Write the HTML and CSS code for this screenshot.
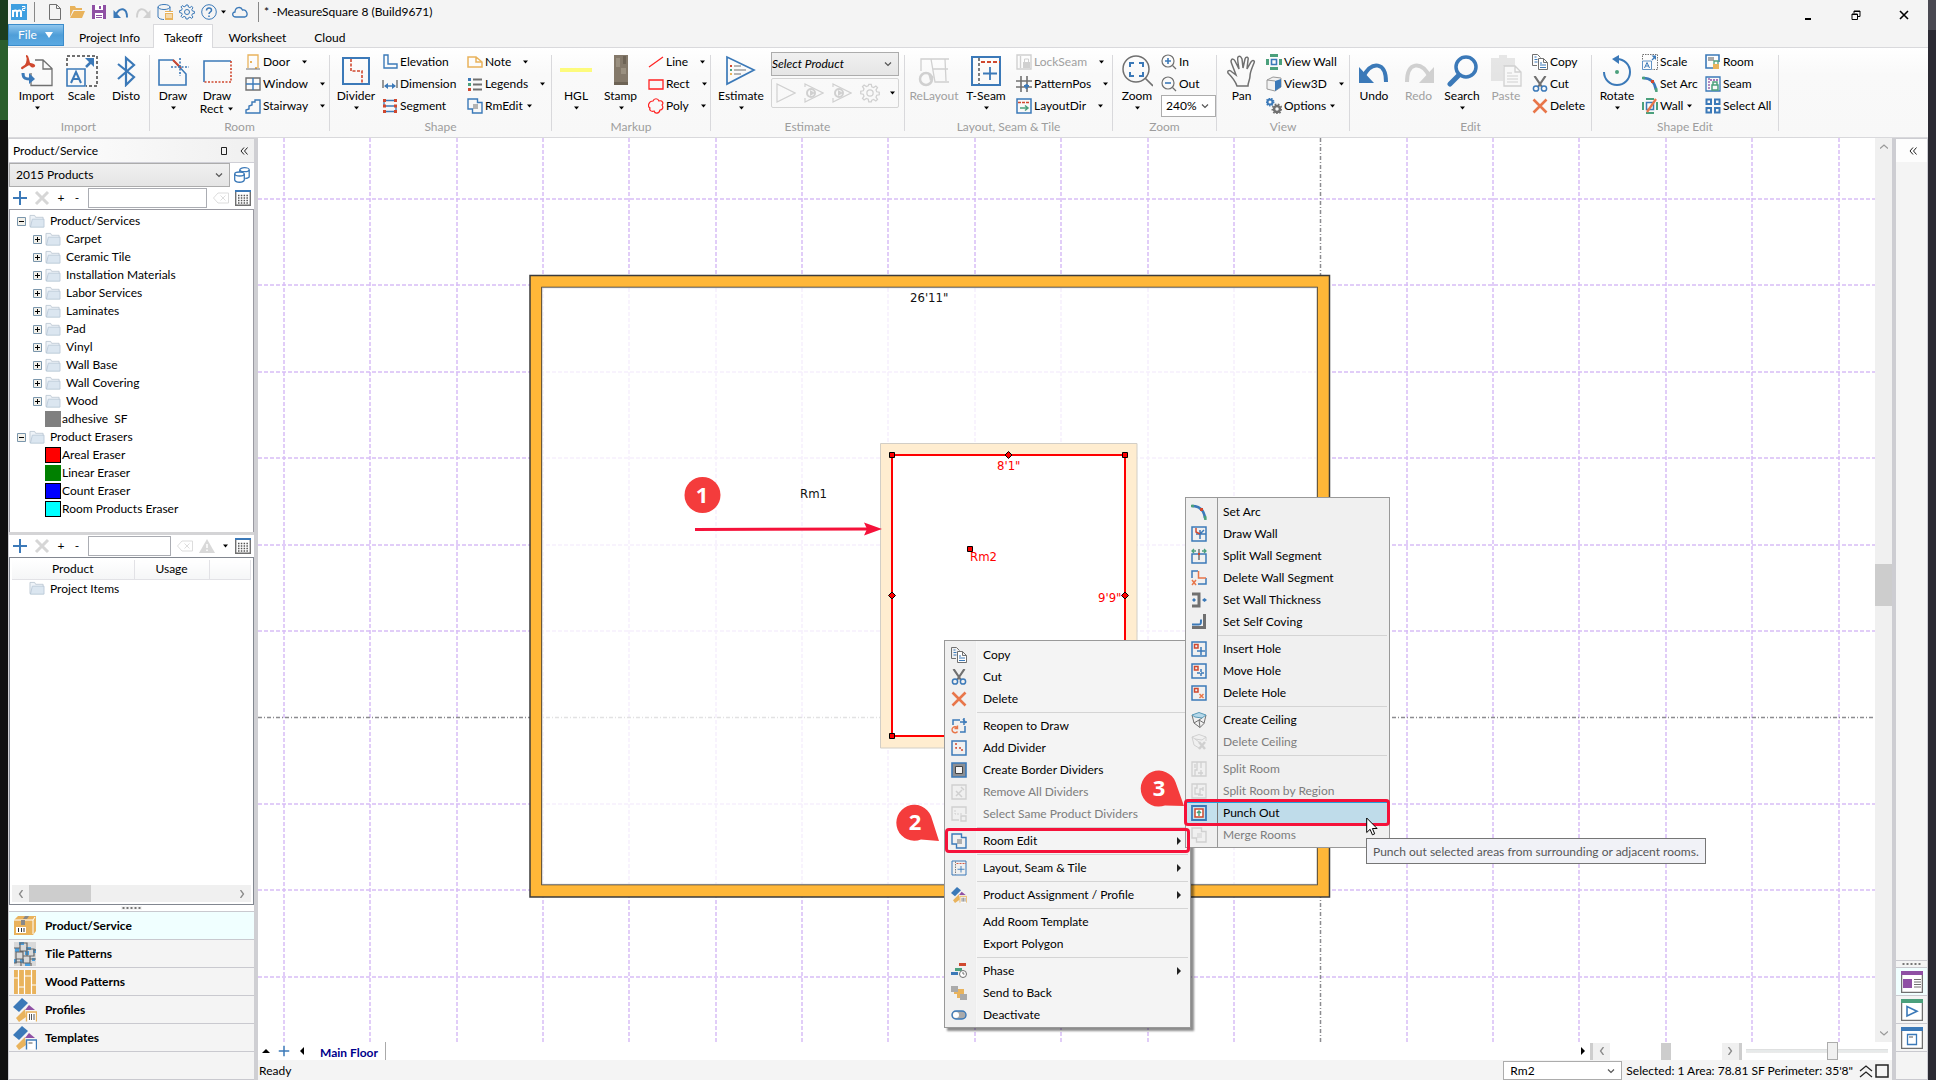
FILE: index.html
```html
<!DOCTYPE html>
<html lang="en">
<head>
<meta charset="utf-8">
<title>MeasureSquare 8</title>
<link rel="stylesheet" href="styles.css">
</head>
<body>
<svg class="sprite" aria-hidden="true">
  <defs>
    <symbol id="i-page" viewBox="0 0 16 16"><path class="sk" d="M2.5.5h7l4 4v11h-11zM9.500.5v4h4"/></symbol>
    <symbol id="i-open" viewBox="0 0 16 16"><path class="fo" d="M1 2h5l1 2h6v2H4L1 13zM5 7h11l-3 7H1z"/></symbol>
    <symbol id="i-save" viewBox="0 0 16 16"><path class="fp" d="M1 1h14v14H1z"/><path class="fw" d="M4 1h8v5H4zM4 9h8v6H4z"/><path class="fp" d="M8 2h2v3H8zM5 11h6v1H5zM5 13h6v1H5z"/></symbol>
    <symbol id="i-undo" viewBox="0 0 32 32"><path class="sb" stroke-width="4" d="M5 22C14 5 28 7 28 27"/><path class="fb" d="M1 12v16h15z"/></symbol>
    <symbol id="i-redo" viewBox="0 0 32 32"><path class="sb" stroke-width="4" d="M27 22C18 5 4 7 4 27"/><path class="fb" d="M31 12v16H16z"/></symbol>
    <symbol id="i-db" viewBox="0 0 16 16"><ellipse class="sb" cx="7" cy="3" rx="6" ry="2.500"/><path class="sb" d="M1 3v10c1 2 4 2.500 6 2.500M13 3v4"/><path class="fo" d="M8 7h8v9H8z"/><path class="sw" d="M10 10v4M12 10v4M14 10v4M8 8.500h8"/></symbol>
    <symbol id="i-gear" viewBox="0 0 16 16"><path class="sb" d="M7 1h2l.4 2 1.500.6 1.800-1.200 1.300 1.300-1.200 1.800.6 1.500 2 .4v2l-2 .4-.6 1.500 1.200 1.800-1.300 1.300-1.800-1.200-1.500.6L9 15H7l-.4-2-1.500-.6-1.800 1.200L2 12.300l1.200-1.800L2.600 9l-2-.4v-2l2-.4.6-1.500L2 2.900l1.300-1.300 1.800 1.200 1.500-.6z"/><circle class="sb" cx="8" cy="8" r="2.500"/></symbol>
    <symbol id="i-help" viewBox="0 0 16 16"><circle class="sb" cx="8" cy="8" r="7.300"/><path class="sb" stroke-width="1.500" d="M5.500 6.500c0-3.500 5-3 5-.3 0 1.800-2.500 1.800-2.500 3.800M8 11.500v1.500"/></symbol>
    <symbol id="i-cloud" viewBox="0 0 16 16"><path class="sb" stroke-width="1.300" d="M4 13c-4.500 0-4-5-1-5C3 3 9 2 10.500 6c4-1 6.500 5.500 2.500 7z"/></symbol>

    <symbol id="i-import" viewBox="0 0 32 32"><path class="sk" stroke-width="1.300" d="M10 18v12.500h21v-17L22 5h-8M22 5v9h9"/><path class="sr" stroke-width="2" d="M5 1c2 0 2 4 3 7s4 4 5 3-3-3-7-1-5 4-5 3 4-1 5-5 1-7-1-7z"/><path class="sb" stroke-width="3" d="M2 18c0 6 3 6 8 6"/><path class="fb" d="M8 18l6 6-6 5z"/></symbol>
    <symbol id="i-scale" viewBox="0 0 32 32"><path class="sk" stroke-width="2" stroke-dasharray="3 2" d="M1 11V1h30v30H20"/><path class="sb" stroke-width="1.600" d="M1 14h18v17H1z"/><path class="sb" stroke-width="2" d="M5 28l5-11 5 11M7 24h6"/><path class="sb" stroke-width="2.500" d="M20 12l6-6"/><path class="fb" d="M28 3v9l-9-9z"/></symbol>
    <symbol id="i-disto" viewBox="0 0 32 32"><path class="sb" stroke-width="2.200" d="M8 9l16 13-8 8V3l8 7L8 24"/></symbol>
    <symbol id="i-draw" viewBox="0 0 32 32"><path class="sb" stroke-width="1.600" d="M16 5H2v25h27V19z"/><path class="sr" stroke-width="2" d="M16 5l8 8"/><path class="sb" stroke-width="1.600" stroke-dasharray="2 1.500" d="M14 12h18M23 3v18"/></symbol>
    <symbol id="i-drawrect" viewBox="0 0 32 32"><path class="sb" stroke-width="1.600" d="M3 27V6h27"/><path class="sr" stroke-width="1.600" stroke-dasharray="2 1.500" d="M30 6v21H3"/></symbol>
    <symbol id="i-door" viewBox="0 0 16 16"><path class="so" stroke-width="1.300" d="M3 14V1h10v13"/><path class="fo" d="M5 7h2v2H5zM10 13h2v2h-2z"/><path class="sk" d="M1 15h14"/></symbol>
    <symbol id="i-window" viewBox="0 0 16 16"><path class="sk" stroke-width="1.400" d="M1 2h14v12H1z"/><path class="sb" stroke-width="1.400" d="M8 2v12M1 8h14"/></symbol>
    <symbol id="i-stair" viewBox="0 0 16 16"><path class="sb" stroke-width="1.400" d="M1 15v-3l3-1V8l3-1V4h3V2h5v13z"/></symbol>
    <symbol id="i-divider" viewBox="0 0 32 32"><path class="sb" stroke-width="2" d="M3 3h26v26H3z"/><path class="sr" stroke-width="1.600" stroke-dasharray="3 1.500" d="M11 4v12h11v12"/></symbol>
    <symbol id="i-elev" viewBox="0 0 16 16"><path class="sb" stroke-width="1.400" d="M2 1h4v9h9v4H2z"/></symbol>
    <symbol id="i-dim" viewBox="0 0 16 16"><path class="sk" stroke-width="1.400" d="M1 4v8M15 4v8"/><path class="sb" stroke-width="1.500" d="M3 10h10"/><path class="fb" d="M6 7v6l-4-3zM10 7v6l4-3z"/></symbol>
    <symbol id="i-seg" viewBox="0 0 16 16"><path class="sb" stroke-width="1.300" d="M14 2.500H2v5.500h12v5.500H2"/><path class="fr" d="M1 1h3v3H1zM12 1h3v3h-3zM1 6.500h3v3H1zM12 6.500h3v3h-3zM1 12h3v3H1zM12 12h3v3h-3z"/></symbol>
    <symbol id="i-note" viewBox="0 0 16 16"><path class="so" stroke-width="1.500" d="M1 3h8l6 5v5H1zM9 3v5h6"/></symbol>
    <symbol id="i-legend" viewBox="0 0 16 16"><path class="fr" d="M1 12h3v3H1z"/><path class="fb" d="M1 2h3v3H1z"/><path class="fg" d="M1 7h3v3H1z"/><path class="sk" stroke-width="2" d="M6 3.500h9M6 8.500h9M6 13.500h9"/></symbol>
    <symbol id="i-merge" viewBox="0 0 16 16"><path class="fk" opacity=".5" d="M6 6h5v5H6z"/><path class="sb" stroke-width="1.400" d="M5.500 11H1V1h9.500v3.500H15V15H5.500z"/></symbol>
    <symbol id="i-hgl" viewBox="0 0 32 32"><path fill="#fdfb7c" d="M0 13h32v4H0z"/></symbol>
    <symbol id="i-stamp" viewBox="0 0 32 32"><path fill="#84796a" d="M9 0h14v30H9z"/><path fill="#9a9080" d="M11 3h4v9h-4zM16 13h5v6h-5z"/><path fill="#6d6355" d="M9 27h14v3H9zM18 1h3v8h-3z"/></symbol>
    <symbol id="i-line" viewBox="0 0 16 16"><path stroke="#f22" stroke-width="1.200" d="M1 13L15 3"/></symbol>
    <symbol id="i-rect" viewBox="0 0 16 16"><path stroke="#f22" stroke-width="1.300" d="M1 4h14v9H1z"/></symbol>
    <symbol id="i-poly" viewBox="0 0 16 16"><path stroke="#f22" stroke-width="1.200" d="M5 3c1-3 5-3 6 0 3-1 5 2 3 4 2 3 0 5-2 5-1 4-5 4-6 1-3 1-5-1-4-3-3-2-1-7 3-7z"/></symbol>
    <symbol id="i-estimate" viewBox="0 0 32 32"><path class="sb" stroke-width="1.700" d="M2 2v27l27-14z"/><path class="fr" d="M5 10h2v2H5z"/><path class="fg" d="M5 14h2v2H5z"/><path class="fo" d="M5 18h2v2H5z"/><path class="sk" d="M9 11h7M9 15h12M9 19h7"/></symbol>
    <symbol id="i-play" viewBox="0 0 20 20"><path class="sk" stroke-width="1.200" d="M1 1v18l18-9z"/></symbol>
    <symbol id="i-playr" viewBox="0 0 20 20"><path class="sk" stroke-width="1.200" d="M1 4V1l18 9L1 19v-4"/><circle class="sk" stroke-width="2" cx="7" cy="10" r="4"/><path class="fk" d="M6 7l5 3-5 3z"/></symbol>
    <symbol id="i-relayout" viewBox="0 0 32 32"><path class="sk" stroke-width="1.300" d="M3 16V4h28M13 4l4 23h14M15 14h15M3 4h10M27 4l1 22"/><circle class="sk" stroke-width="2.500" cx="8" cy="24" r="6"/><path class="fk" d="M10 18l6 4-4 4z"/></symbol>
    <symbol id="i-tseam" viewBox="0 0 32 32"><path class="sb" stroke-width="2" d="M2 2h28v28H2z"/><path class="sk" stroke-width="1.800" stroke-dasharray="3 2" d="M9 3v26"/><path class="sr" stroke-width="1.800" stroke-dasharray="4 2" d="M11 7h19"/><path class="sb" stroke-width="1.800" d="M20 12v13M13 18.500h14"/></symbol>
    <symbol id="i-lock" viewBox="0 0 16 16"><path class="sk" stroke-width="1.400" d="M1 1h14v14H1zM4.500 2v12"/><path class="fk" d="M7 8h7v6H7z"/><path class="sk" d="M8.500 8V5h4v3"/></symbol>
    <symbol id="i-pattern" viewBox="0 0 16 16"><path class="sk" stroke-width="1.600" d="M5 0v16M11 0v16M0 5h16M0 11h16"/><path class="sb" stroke-width="2" d="M8 10h5M10.500 8v5"/></symbol>
    <symbol id="i-layoutdir" viewBox="0 0 16 16"><path class="sb" stroke-width="1.500" d="M1 1h14v14H1z"/><path class="sr" stroke-width="1.400" stroke-dasharray="3 1" d="M2 4.500h12"/><path class="sg" stroke-width="1.500" d="M4 10h7M9 7.500l3 2.500-3 2.500"/></symbol>
    <symbol id="i-zoom" viewBox="0 0 32 32"><circle class="sk" stroke-width="1.500" cx="15" cy="14" r="13"/><path class="sk" stroke-width="1.700" d="M24 23l8 8"/><path class="sb" stroke-width="2" d="M9 12V8h4M18 8h4v4M22 17v4h-4M13 21H9v-4"/></symbol>
    <symbol id="i-zin" viewBox="0 0 16 16"><circle class="sk" stroke-width="1.200" cx="7" cy="7" r="6"/><path class="sk" stroke-width="1.300" d="M11.500 11.500L15 15"/><path class="sb" stroke-width="1.600" d="M4 7h6M7 4v6"/></symbol>
    <symbol id="i-zout" viewBox="0 0 16 16"><circle class="sk" stroke-width="1.200" cx="7" cy="7" r="6"/><path class="sk" stroke-width="1.300" d="M11.500 11.500L15 15"/><path class="sb" stroke-width="1.600" d="M4 7h6"/></symbol>
    <symbol id="i-pan" viewBox="0 0 32 32"><path class="sk" stroke-width="1.500" d="M11 31c-2-6-6-10-9-13-1-3 2-3 4-1l4 3C8 14 5 8 5 6c1-3 3-2 4 0l4 8C12 8 11 3 12 2c2-2 3 0 4 2l1 9 2-9c1-3 4-2 3 1l-1 9 4-7c2-3 4-1 3 1-2 5-4 9-4 13 0 4-2 6-2 10z"/></symbol>
    <symbol id="i-vwall" viewBox="0 0 16 16"><path class="fg" d="M4 0h8v3H4zM4 13h8v3H4zM0 5h3v6H0zM13 5h3v6h-3z"/><path class="sb" stroke-width="1.600" d="M5.500 5.500h5v5h-5z"/></symbol>
    <symbol id="i-3d" viewBox="0 0 16 16"><path fill="#f2f2f2" stroke="#999" d="M1 4l6-3 8 1v9l-6 4-8-2z"/><path class="fb" d="M9 5l6-2v8l-6 4z"/><path stroke="#999" d="M1 4l8 1"/></symbol>
    <symbol id="i-opts" viewBox="0 0 16 16"><circle class="sb" stroke-width="2" cx="4" cy="4" r="2.500"/><circle class="sb" stroke-width="1.500" stroke-dasharray="1.400 1.200" cx="4" cy="4" r="3.700"/><circle class="sk" stroke-width="2.500" cx="11" cy="11" r="3"/><circle class="sk" stroke-width="1.600" stroke-dasharray="1.700 1.500" cx="11" cy="11" r="4.700"/></symbol>
    <symbol id="i-search" viewBox="0 0 32 32"><circle class="sb" stroke-width="3.500" cx="20" cy="12" r="10"/><path class="sb" stroke-width="5" stroke-linecap="round" d="M12 21l-8 8"/></symbol>
    <symbol id="i-paste" viewBox="0 0 32 32"><path class="fk" opacity=".5" d="M1 3h8V0h8v3h8v8H13v15H1z"/><path fill="#f8f8f8" class="sk" stroke-width="1.300" d="M14 11h11l6 6v14H14zM25 11v6h6"/><path class="sk" d="M17 18h5M17 21h11M17 24h11M17 27h11"/></symbol>
    <symbol id="i-copy" viewBox="0 0 16 16"><path class="sk" d="M5 11.500H.5v-11h5l3 3"/><path class="sb" d="M2.500 3h2M2.500 5.500h3M2.500 8h3"/><path class="sk" fill="#fff" d="M6.500 4.500h5l4 4v7h-9zM11.500 4.500v4h4"/><path class="sb" d="M8 9h2M8 11h6M8 13.500h6"/></symbol>
    <symbol id="i-cut" viewBox="0 0 16 16"><path class="sk" stroke-width="2.200" d="M2.500 0L10 11M13.500 0L6 11"/><circle class="sb" stroke-width="1.500" cx="4" cy="12.500" r="2.600"/><circle class="sb" stroke-width="1.500" cx="12" cy="12.500" r="2.600"/></symbol>
    <symbol id="i-x" viewBox="0 0 16 16"><path stroke="#e8764a" stroke-width="2.600" d="M1.500 1.500l13 13M14.500 1.500l-13 13"/></symbol>
    <symbol id="i-rotate" viewBox="0 0 32 32"><path class="sb" stroke-width="2" d="M3 17a13 13 0 1 0 13-13"/><path class="fb" d="M18 0v9l-7-5z"/><circle class="fg" cx="16" cy="17" r="2"/></symbol>
    <symbol id="i-arc" viewBox="0 0 16 16"><path class="sb" stroke-width="2.600" d="M1 2c8 0 12 5 13 12"/><path class="sg" stroke-width="2.600" d="M0 2h3M14 12l.500 4"/><path class="fr" d="M9 4h3v3H9z"/></symbol>
    <symbol id="i-wall" viewBox="0 0 16 16"><path class="fg" d="M4 0h8v2H4zM4 14h8v2H4zM0 4h2v8H0zM14 4h2v8h-2z"/><path class="sb" stroke-width="1.500" d="M4.500 4.500h7v7h-7z"/><path stroke="#e8764a" stroke-width="2.200" d="M14 1L5 14"/></symbol>
    <symbol id="i-room" viewBox="0 0 16 16"><path class="sb" stroke-width="1.600" d="M9 14H1V1h13v7"/><path class="fk" opacity=".6" d="M3 3h6v4H3z"/><path class="sg" stroke-width="1.300" d="M9 10V7h4v3"/><path class="fo" d="M8 10h6v5H8z"/></symbol>
    <symbol id="i-seam" viewBox="0 0 16 16"><path class="sb" stroke-width="1.300" d="M1 1h14v14H1z"/><path class="sp" stroke-width="1.300" stroke-dasharray="2 1" d="M4 2v12M5 4h9"/><path class="sg" stroke-width="1.500" d="M7 9h6v5H7zM8 9V6h4v3"/></symbol>
    <symbol id="i-all" viewBox="0 0 16 16"><path class="sb" stroke-width="2" d="M1.500 1.500H6V6H1.500zM10 1.500h4.500V6H10zM1.500 10H6v4.500H1.500zM10 10h4.500v4.500H10z"/></symbol>

    <symbol id="i-dbs" viewBox="0 0 16 16"><ellipse class="sb" stroke-width="1.300" cx="10.500" cy="2.700" rx="4.700" ry="2"/><path class="sb" stroke-width="1.300" d="M5.800 3v2M15.200 3v7c-1 1-2 1.500-4 1.500"/><ellipse class="sb" stroke-width="1.300" cx="5.500" cy="7" rx="4.800" ry="2"/><path class="sb" stroke-width="1.300" d="M.7 7v6c1 3 8.600 3 9.600 0V7"/></symbol>
    <symbol id="i-plus" viewBox="0 0 16 16"><path class="sb" stroke-width="2" d="M8 1v14M1 8h14"/></symbol>
    <symbol id="i-gx" viewBox="0 0 16 16"><path stroke="#d6d6d6" stroke-width="3" d="M2 2l12 12M14 2L2 14"/></symbol>
    <symbol id="i-bksp" viewBox="0 0 16 16"><path stroke="#ddd" d="M5 3h10.500v10H5L.5 8zM7.500 5.500l5 5M12.500 5.500l-5 5"/></symbol>
    <symbol id="i-grid" viewBox="0 0 16 16"><path class="sk" stroke-width="1.400" d="M.7 1v14.300h14.600V1"/><path class="fb" d="M0 0h16v2H0z"/><path stroke="#555" stroke-width="1.500" stroke-dasharray="1.500 1.300" d="M3 5.500h10.500M3 8h10.500M3 10.500h10.500M3 13h10.500"/></symbol>
    <symbol id="i-warn" viewBox="0 0 16 16"><path fill="#d9d9d9" d="M8 1l8 14H0z"/><path stroke="#fff" stroke-width="1.500" d="M8 6v4M8 11.500V13"/></symbol>
    <symbol id="i-folder" viewBox="0 0 16 16"><path fill="#eef3f8" stroke="#b4c0cc" stroke-width=".8" d="M.5 13.500V1.500h5l1 2h8v10z"/><path fill="#dbe6f0" stroke="#b4c4d4" stroke-width=".8" d="M1 14l2-8.500h12.500v8.500z"/></symbol>
    <symbol id="i-exp" viewBox="0 0 9 9"><path fill="#f3f1ea" stroke="#7a96ac" d="M.5.5h8v8h-8z"/><path stroke="#000" d="M2 4.500h5M4.500 2v5"/></symbol>
    <symbol id="i-col" viewBox="0 0 9 9"><path fill="#f3f1ea" stroke="#7a96ac" d="M.5.5h8v8h-8z"/><path stroke="#000" d="M2 4.500h5"/></symbol>

    <symbol id="i-box" viewBox="0 0 24 24"><path class="fo" d="M1 6l4-4h18v15l-3 4H1z"/><path stroke="#fff" d="M1 6h19v14M20 6l2-3"/><path fill="#888" d="M8 6h4v5H8zM12 2h4l-2 3h-4z"/><path fill="#fff" d="M3 13h10v6H3z"/><path stroke="#333" d="M5.500 14v4M8.500 14v4M11 14v4"/></symbol>
    <symbol id="i-tiles" viewBox="0 0 24 24"><path fill="#d9d9d9" d="M1 0h22v24H1z"/><path fill="#4aa0e0" d="M6 0h5v3H6zM2 6h4v4H2zM13 5h5v3h-5zM20 7h3v4h-3zM1 17h3v4H1zM7 17h4v4H7zM12 9h4v4h-4zM19 16h3v3h-3zM12 21h5v3h-5z"/><path stroke="#666" stroke-width="1.200" d="M7 1v8h7V1zM14 7h7v7h-7zM3 10h7v7H3zM10 14h7v7h-7zM1 6h6M21 8h2M3 17v4H1M3 20h5v4M17 17h6M18 21v3"/></symbol>
    <symbol id="i-wood" viewBox="0 0 24 24"><path class="fo" d="M1 0h22v24H1z"/><path stroke="#fff" stroke-width="1.200" d="M5.500 0v24M11.500 0v24M18.500 0v24M1 8h4M6 17h5M12 6h6M19 15h4"/></symbol>
    <symbol id="i-prof" viewBox="0 0 24 24"><path class="fb" d="M0 9l9-9 6 5-9 9z"/><path class="fo" d="M3 20l9-9 1 8-7 5z"/><path class="fp" d="M12 12l4-5 6 5z"/><path class="so" fill="#fff" stroke-width="1.400" d="M13.500 23.500v-9.500h10v9.500"/><path stroke="#555" d="M16.500 16v6M18.500 16v6M21 16v6"/></symbol>
    <symbol id="i-temp" viewBox="0 0 24 24"><path class="fb" d="M0 9l9-9 6 5-9 9z"/><path class="fo" d="M3 20l9-9 1 8-7 5z"/><path class="fp" d="M12 12l4-5 6 5z"/><path class="sb" fill="#fff" stroke-width="1.400" d="M13.500 23.500v-9.500h10v9.500"/><path fill="#aaa" d="M15.500 16h4v2h-4z"/></symbol>
    <symbol id="i-r1" viewBox="0 0 22 22"><path class="sk" stroke-width="1.300" fill="#fff" d="M.6.6h20.800v20.800H.6z"/><path class="fp" d="M0 0h22v4H0zM2 8h9v9H2z"/><path class="sk" d="M13 8.500h7M13 11h7M13 13.500h7M13 16h7"/></symbol>
    <symbol id="i-r2" viewBox="0 0 22 22"><path class="sk" stroke-width="1.300" fill="#fff" d="M.6.6h20.800v20.800H.6z"/><path class="fg" d="M0 0h22v4H0z"/><path class="sb" stroke-width="1.600" d="M6 7.500v9.500l10-4.800z"/></symbol>
    <symbol id="i-r3" viewBox="0 0 22 22"><path class="sk" stroke-width="1.300" fill="#fff" d="M.6.6h20.800v20.800H.6z"/><path class="fb" d="M0 0h22v4H0z"/><path class="sb" stroke-width="1.300" d="M6.500 7.500h9v10h-9z"/><path fill="#aaa" d="M8 9h4v2H8z"/></symbol>

    <symbol id="m-reopen" viewBox="0 0 16 16"><path class="sb" stroke-width="1.500" d="M2 7V2h7M14 8v6H9M9 4h7M12 1l3 4M13 0v7"/><path stroke="#e8764a" stroke-width="1.400" d="M6 9.500a3 3 0 1 0 .5 4M6.500 7.500v3H3.500"/></symbol>
    <symbol id="m-div" viewBox="0 0 16 16"><path class="sb" stroke-width="1.500" d="M1 1h14v14H1z"/><path class="sr" stroke-width="1.500" stroke-dasharray="2 2" d="M5 3v5h6v5"/></symbol>
    <symbol id="m-border" viewBox="0 0 16 16"><path fill="#8c8f94" d="M1 1h14v14H1z"/><path class="sb" stroke-width="1.600" d="M1 1h14v14H1z"/><path fill="#f4f4f4" stroke="#444" d="M4.500 4.500h7v7h-7z"/></symbol>
    <symbol id="m-selx" viewBox="0 0 16 16"><path class="sk" stroke-width="1.400" d="M8 14H1V1h14v7"/><path class="sk" stroke-dasharray="2 1" d="M4 4v4h7"/><path class="sk" stroke-width="1.400" d="M10 10h5v5h-5z"/></symbol>
    <symbol id="m-remx" viewBox="0 0 16 16"><path class="sk" stroke-width="1.400" d="M1 1h14v14H1z"/><path class="sk" stroke-width="1.500" d="M5 12l6-6M5 7l6 6M10 3l3 3"/></symbol>
    <symbol id="m-phase" viewBox="0 0 16 16"><path class="fr" d="M8 0h7v3H8z"/><path class="fg" d="M4 5h7v3H4z"/><path class="fb" d="M0 9h7v3H0z"/><circle class="sk" cx="12" cy="11" r="3.500" fill="#fff"/><path class="sk" d="M12 9v2h1.500"/></symbol>
    <symbol id="m-back" viewBox="0 0 16 16"><path class="fo" d="M3 4h10v9H6V9H3z"/><path fill="#aaa" d="M0 1h7v6H0zM9 9h7v6H9z"/></symbol>
    <symbol id="m-deact" viewBox="0 0 16 16"><rect x="1" y="4" width="14" height="8" rx="4" fill="#aaa" class="sb" stroke-width="1.400"/><circle cx="5" cy="8" r="3" fill="#fff"/></symbol>
    <symbol id="m-dwall" viewBox="0 0 16 16"><path class="sb" stroke-width="1.500" d="M1 1h14v14H1zM9 4v9M5 8h10M9 8l4-4"/><path class="sr" stroke-width="1.500" d="M5 2v4l4 2"/></symbol>
    <symbol id="m-split" viewBox="0 0 16 16"><path class="sb" stroke-width="1.500" d="M1 6h14v9H1z"/><path class="sk" stroke-width="1.500" d="M8 1v11"/><path class="sg" stroke-width="1.300" d="M1 3h4M11 3h4M3 1L1 3l2 2M13 1l2 2-2 2"/><path class="fr" d="M7 5h2v2H7z"/></symbol>
    <symbol id="m-dseg" viewBox="0 0 16 16"><path class="sb" stroke-width="1.500" d="M1 8V1h6M15 8v6H7"/><path stroke="#e8764a" stroke-width="1.500" d="M7.500 1v7H15M1 10l4 5M5 10l-4 5"/></symbol>
    <symbol id="m-thick" viewBox="0 0 16 16"><path class="sk" stroke-width="3" d="M1 2h7v12H1"/><path class="fb" d="M1 8l2-2 2 2-2 2zM11 8l2.500-2L16 8l-2.500 2z"/></symbol>
    <symbol id="m-cove" viewBox="0 0 16 16"><path class="sk" stroke-width="3" d="M1 13.500h12.500V0"/><path class="sb" stroke-width="2" d="M1 10.500h7c2 0 2-1 2-5"/></symbol>
    <symbol id="m-ins" viewBox="0 0 16 16"><path class="sb" stroke-width="1.500" d="M1 1h14v14H1zM10 6v8M6 10h8"/><path class="sr" stroke-width="1.500" d="M3.500 3.500H7V7H3.500z"/></symbol>
    <symbol id="m-mov" viewBox="0 0 16 16"><path class="sb" stroke-width="1.500" d="M1 1h14v14H1z"/><path class="sb" stroke-width="1.500" stroke-dasharray="3 1" d="M10 6v8M6 10h8"/><path class="sr" stroke-width="1.500" d="M3.500 3.500H7V7H3.500z"/></symbol>
    <symbol id="m-delh" viewBox="0 0 16 16"><path class="sb" stroke-width="1.500" d="M1 1h14v14H1z"/><path stroke="#e8764a" stroke-width="1.500" d="M8.500 9l4 4M12.500 9l-4 4"/><path class="sr" stroke-width="1.500" d="M3.500 3.500H7V7H3.500z"/></symbol>
    <symbol id="m-ceil" viewBox="0 0 16 16"><path class="sk" d="M1 3l2 8 6 4.500 4-4L15 3M9 15.500L8 8l3-2M3 11l5-3 5 3"/><path fill="#b5d8ea" stroke="#5a9ab8" d="M1 3l7-2.500L15 3l-4 3-7-1z"/></symbol>
    <symbol id="m-ceilx" viewBox="0 0 16 16"><path class="sk" d="M1 3l7-2.500L15 3l-4 3-7-1zM1 3l2 8 5 3M15 3v4M4 5l4 3"/><path class="sk" stroke-width="2.500" d="M8 8l6 7M14 8l-6 7"/></symbol>
    <symbol id="m-sr" viewBox="0 0 16 16"><path class="sk" stroke-width="1.300" d="M1 1h14v14H1zM6 1v8H4v6M10 1v6M7 12h5M10 9v6M4 3v4"/></symbol>
    <symbol id="m-srr" viewBox="0 0 16 16"><path class="sk" stroke-width="1.300" d="M1 1h14v14H1zM6 1v4H4v6h5V6h3M12 4v4M7 12h5"/></symbol>
    <symbol id="m-punch" viewBox="0 0 16 16"><path class="sb" stroke-width="1.800" d="M1 1h14v14H1z"/><path fill="#fff" class="sr" stroke-width="1.500" d="M4 4h8v8H4z"/><path class="sg" stroke-width="1.500" d="M8 11V6M6 8l2-2 2 2"/></symbol>
    <symbol id="c-down" viewBox="0 0 8 8"><path fill="#000" stroke="none" d="M2 2.500h5L4.500 5.500z"/></symbol>
    <symbol id="c-chev" viewBox="0 0 8 8"><path stroke="#555" stroke-width="1.200" d="M1 2.500l3 3 3-3"/></symbol>
    <symbol id="c-right" viewBox="0 0 8 8"><path fill="#222" d="M2 0v8l4-4z"/></symbol>
  </defs>
</svg>

<div class="desktop">
  <div class="edge-left"><i class="e1"></i><i class="e2"></i></div>
  <div class="app">
    <header class="titlebar">
      <svg class="logo" viewBox="0 0 16 16"><path fill="#3f9fe0" d="M0 0h16v16H0z"/><path stroke="#fff" stroke-width="2" d="M2 13V6M2 8c1-2 4-2 4 0v5M6 8c1-2 4-2 4 0v5"/><path stroke="#fff" d="M11 2.500h3v2h-2.500v2H14"/></svg>
      <span class="tsep"></span>
      <nav class="quick" aria-label="Quick access">
        <button aria-label="New"><svg><use href="#i-page"/></svg></button>
        <button aria-label="Open"><svg><use href="#i-open"/></svg></button>
        <button aria-label="Save"><svg><use href="#i-save"/></svg></button>
        <button aria-label="Undo"><svg><use href="#i-undo"/></svg></button>
        <button aria-label="Redo" class="off"><svg><use href="#i-redo"/></svg></button>
        <button aria-label="Database"><svg><use href="#i-db"/></svg></button>
        <button aria-label="Settings"><svg><use href="#i-gear"/></svg></button>
        <button aria-label="Help" class="wide"><svg><use href="#i-help"/></svg><svg class="dd"><use href="#c-down"/></svg></button>
        <button aria-label="Cloud sync"><svg><use href="#i-cloud"/></svg></button>
      </nav>
      <span class="tsep"></span>
      <h1>* -MeasureSquare 8 (Build9671)</h1>
      <div class="winbtns">
        <button aria-label="Minimize"><svg viewBox="0 0 10 10"><path stroke="#000" stroke-width="2" d="M2 9h6"/></svg></button>
        <button aria-label="Restore"><svg viewBox="0 0 10 10"><path stroke="#000" d="M1 4h5.500v5.500H1zM3 3.500V1h6v5.500H7M3 1.500h6M1 4.500h5.500"/></svg></button>
        <button aria-label="Close"><svg viewBox="0 0 10 10"><path stroke="#000" stroke-width="1.600" d="M1 1l8 8M9 1L1 9"/></svg></button>
      </div>
    </header>

    <nav class="tabs" aria-label="Ribbon tabs">
      <button class="file">File <svg viewBox="0 0 8 6"><path fill="#fff" d="M0 0h8L4 6z"/></svg></button>
      <button class="tab">Project Info</button>
      <button class="tab active">Takeoff</button>
      <button class="tab">Worksheet</button>
      <button class="tab">Cloud</button>
    </nav>

    <section class="ribbon">
      <div class="group g-import"><div class="items">
        <button class="big"><svg><use href="#i-import"/></svg><span>Import</span><svg class="dd"><use href="#c-down"/></svg></button>
        <button class="big"><svg><use href="#i-scale"/></svg><span>Scale</span></button>
        <button class="big"><svg><use href="#i-disto"/></svg><span>Disto</span></button>
      </div><h2>Import</h2></div>

      <div class="group g-room"><div class="items">
        <button class="big"><svg><use href="#i-draw"/></svg><span>Draw</span><svg class="dd"><use href="#c-down"/></svg></button>
        <button class="big"><svg><use href="#i-drawrect"/></svg><span>Draw</span><span>Rect <svg class="dd"><use href="#c-down"/></svg></span></button>
        <div class="col">
          <button class="sm"><svg><use href="#i-door"/></svg><span>Door</span><svg class="dd"><use href="#c-down"/></svg></button>
          <button class="sm"><svg><use href="#i-window"/></svg><span>Window</span><svg class="dd"><use href="#c-down"/></svg></button>
          <button class="sm"><svg><use href="#i-stair"/></svg><span>Stairway</span><svg class="dd"><use href="#c-down"/></svg></button>
        </div>
      </div><h2>Room</h2></div>

      <div class="group g-shape"><div class="items">
        <button class="big"><svg><use href="#i-divider"/></svg><span>Divider</span><svg class="dd"><use href="#c-down"/></svg></button>
        <div class="col">
          <button class="sm"><svg><use href="#i-elev"/></svg><span>Elevation</span></button>
          <button class="sm"><svg><use href="#i-dim"/></svg><span>Dimension</span></button>
          <button class="sm"><svg><use href="#i-seg"/></svg><span>Segment</span></button>
        </div>
        <div class="col">
          <button class="sm"><svg><use href="#i-note"/></svg><span>Note</span><svg class="dd"><use href="#c-down"/></svg></button>
          <button class="sm"><svg><use href="#i-legend"/></svg><span>Legends</span><svg class="dd"><use href="#c-down"/></svg></button>
          <button class="sm tight"><svg><use href="#i-merge"/></svg><span>RmEdit</span><svg class="dd"><use href="#c-down"/></svg></button>
        </div>
      </div><h2>Shape</h2></div>

      <div class="group g-markup"><div class="items">
        <button class="big"><svg><use href="#i-hgl"/></svg><span>HGL</span><svg class="dd"><use href="#c-down"/></svg></button>
        <button class="big"><svg><use href="#i-stamp"/></svg><span>Stamp</span><svg class="dd"><use href="#c-down"/></svg></button>
        <div class="col">
          <button class="sm"><svg><use href="#i-line"/></svg><span>Line</span><svg class="dd"><use href="#c-down"/></svg></button>
          <button class="sm"><svg><use href="#i-rect"/></svg><span>Rect</span><svg class="dd"><use href="#c-down"/></svg></button>
          <button class="sm"><svg><use href="#i-poly"/></svg><span>Poly</span><svg class="dd"><use href="#c-down"/></svg></button>
        </div>
      </div><h2>Markup</h2></div>

      <div class="group g-estimate"><div class="items">
        <button class="big"><svg><use href="#i-estimate"/></svg><span>Estimate</span><svg class="dd"><use href="#c-down"/></svg></button>
        <div class="col est">
          <div class="combo grey"><select aria-label="Select product"><option>Select Product</option></select><svg><use href="#c-chev"/></svg></div>
          <div class="player off">
            <button aria-label="Run" disabled><svg><use href="#i-play"/></svg></button>
            <button aria-label="Run next" disabled><svg><use href="#i-playr"/></svg></button>
            <button aria-label="Run timed" disabled><svg><use href="#i-playr"/></svg></button>
            <button aria-label="Estimate settings" disabled><svg><use href="#i-gear"/></svg></button>
            <svg class="dd"><use href="#c-down"/></svg>
          </div>
        </div>
      </div><h2>Estimate</h2></div>

      <div class="group g-layout"><div class="items">
        <button class="big off" disabled><svg><use href="#i-relayout"/></svg><span>ReLayout</span></button>
        <button class="big"><svg><use href="#i-tseam"/></svg><span>T-Seam</span><svg class="dd"><use href="#c-down"/></svg></button>
        <div class="col">
          <button class="sm off"><svg><use href="#i-lock"/></svg><span>LockSeam</span><svg class="dd"><use href="#c-down"/></svg></button>
          <button class="sm"><svg><use href="#i-pattern"/></svg><span>PatternPos</span><svg class="dd"><use href="#c-down"/></svg></button>
          <button class="sm"><svg><use href="#i-layoutdir"/></svg><span>LayoutDir</span><svg class="dd"><use href="#c-down"/></svg></button>
        </div>
      </div><h2>Layout, Seam &amp; Tile</h2></div>

      <div class="group g-zoom"><div class="items">
        <button class="big"><svg><use href="#i-zoom"/></svg><span>Zoom</span><svg class="dd"><use href="#c-down"/></svg></button>
        <div class="col">
          <button class="sm"><svg><use href="#i-zin"/></svg><span>In</span></button>
          <button class="sm"><svg><use href="#i-zout"/></svg><span>Out</span></button>
          <div class="combo pct"><select aria-label="Zoom level"><option>240%</option></select><svg><use href="#c-chev"/></svg></div>
        </div>
      </div><h2>Zoom</h2></div>

      <div class="group g-view"><div class="items">
        <button class="big"><svg><use href="#i-pan"/></svg><span>Pan</span></button>
        <div class="col">
          <button class="sm"><svg><use href="#i-vwall"/></svg><span>View Wall</span></button>
          <button class="sm"><svg><use href="#i-3d"/></svg><span>View3D</span><svg class="dd"><use href="#c-down"/></svg></button>
          <button class="sm tight"><svg><use href="#i-opts"/></svg><span>Options</span><svg class="dd"><use href="#c-down"/></svg></button>
        </div>
      </div><h2>View</h2></div>

      <div class="group g-edit"><div class="items">
        <button class="big"><svg><use href="#i-undo"/></svg><span>Undo</span></button>
        <button class="big off" disabled><svg><use href="#i-redo"/></svg><span>Redo</span></button>
        <button class="big"><svg><use href="#i-search"/></svg><span>Search</span><svg class="dd"><use href="#c-down"/></svg></button>
        <button class="big off" disabled><svg><use href="#i-paste"/></svg><span>Paste</span></button>
        <div class="col">
          <button class="sm"><svg><use href="#i-copy"/></svg><span>Copy</span></button>
          <button class="sm"><svg><use href="#i-cut"/></svg><span>Cut</span></button>
          <button class="sm"><svg><use href="#i-x"/></svg><span>Delete</span></button>
        </div>
      </div><h2>Edit</h2></div>

      <div class="group g-shapeedit"><div class="items">
        <button class="big"><svg><use href="#i-rotate"/></svg><span>Rotate</span><svg class="dd"><use href="#c-down"/></svg></button>
        <div class="col">
          <button class="sm"><svg><use href="#i-scale"/></svg><span>Scale</span></button>
          <button class="sm"><svg><use href="#i-arc"/></svg><span>Set Arc</span></button>
          <button class="sm tight"><svg><use href="#i-wall"/></svg><span>Wall</span><svg class="dd"><use href="#c-down"/></svg></button>
        </div>
        <div class="col">
          <button class="sm"><svg><use href="#i-room"/></svg><span>Room</span></button>
          <button class="sm"><svg><use href="#i-seam"/></svg><span>Seam</span></button>
          <button class="sm"><svg><use href="#i-all"/></svg><span>Select All</span></button>
        </div>
      </div><h2>Shape Edit</h2></div>
    </section>

    <div class="body">
      <aside class="side">
        <div class="side-head"><h2>Product/Service</h2>
          <button aria-label="Float panel"><svg viewBox="0 0 8 8"><path stroke="#222" d="M1.500.500h5v7h-5z"/></svg></button>
          <button aria-label="Collapse panel"><svg viewBox="0 0 8 8"><path stroke="#222" d="M4 .5L1 4l3 3.500M7.500.500L4.500 4l3 3.500"/></svg></button>
        </div>
        <div class="catalog"><div class="combo grey"><select aria-label="Product catalog"><option>2015 Products</option></select><svg><use href="#c-chev"/></svg></div><button class="ic" aria-label="Catalog database"><svg><use href="#i-dbs"/></svg></button></div>
        <div class="tools">
          <button class="ic" aria-label="Add"><svg><use href="#i-plus"/></svg></button>
          <button class="ic" aria-label="Remove"><svg><use href="#i-gx"/></svg></button>
          <button class="pm">+</button><button class="pm">-</button>
          <input type="text" aria-label="Filter products">
          <button class="ic" aria-label="Clear filter"><svg><use href="#i-bksp"/></svg></button>
          <button class="ic" aria-label="Table view"><svg><use href="#i-grid"/></svg></button>
        </div>
        <ul class="tree">
          <li><svg class="ex"><use href="#i-col"/></svg><svg class="fo-i"><use href="#i-folder"/></svg><span>Product/Services</span></li>
          <li class="l2"><svg class="ex"><use href="#i-exp"/></svg><svg class="fo-i"><use href="#i-folder"/></svg><span>Carpet</span></li>
          <li class="l2"><svg class="ex"><use href="#i-exp"/></svg><svg class="fo-i"><use href="#i-folder"/></svg><span>Ceramic Tile</span></li>
          <li class="l2"><svg class="ex"><use href="#i-exp"/></svg><svg class="fo-i"><use href="#i-folder"/></svg><span>Installation Materials</span></li>
          <li class="l2"><svg class="ex"><use href="#i-exp"/></svg><svg class="fo-i"><use href="#i-folder"/></svg><span>Labor Services</span></li>
          <li class="l2"><svg class="ex"><use href="#i-exp"/></svg><svg class="fo-i"><use href="#i-folder"/></svg><span>Laminates</span></li>
          <li class="l2"><svg class="ex"><use href="#i-exp"/></svg><svg class="fo-i"><use href="#i-folder"/></svg><span>Pad</span></li>
          <li class="l2"><svg class="ex"><use href="#i-exp"/></svg><svg class="fo-i"><use href="#i-folder"/></svg><span>Vinyl</span></li>
          <li class="l2"><svg class="ex"><use href="#i-exp"/></svg><svg class="fo-i"><use href="#i-folder"/></svg><span>Wall Base</span></li>
          <li class="l2"><svg class="ex"><use href="#i-exp"/></svg><svg class="fo-i"><use href="#i-folder"/></svg><span>Wall Covering</span></li>
          <li class="l2"><svg class="ex"><use href="#i-exp"/></svg><svg class="fo-i"><use href="#i-folder"/></svg><span>Wood</span></li>
          <li class="leaf"><i class="sw grey-sw"></i><span>adhesive&nbsp; SF</span></li>
          <li><svg class="ex"><use href="#i-col"/></svg><svg class="fo-i"><use href="#i-folder"/></svg><span>Product Erasers</span></li>
          <li class="leaf"><i class="sw red-sw"></i><span>Areal Eraser</span></li>
          <li class="leaf"><i class="sw green-sw"></i><span>Linear Eraser</span></li>
          <li class="leaf"><i class="sw blue-sw"></i><span>Count Eraser</span></li>
          <li class="leaf"><i class="sw cyan-sw"></i><span>Room Products Eraser</span></li>
        </ul>
        <div class="splitter"></div>
        <div class="tools">
          <button class="ic" aria-label="Add item"><svg><use href="#i-plus"/></svg></button>
          <button class="ic" aria-label="Remove item"><svg><use href="#i-gx"/></svg></button>
          <button class="pm">+</button><button class="pm">-</button>
          <input type="text" aria-label="Filter project items">
          <button class="ic" aria-label="Clear item filter"><svg><use href="#i-bksp"/></svg></button>
          <button class="ic" aria-label="Warnings"><svg><use href="#i-warn"/></svg></button>
          <svg class="dd"><use href="#c-down"/></svg>
          <button class="ic" aria-label="Item table view"><svg><use href="#i-grid"/></svg></button>
        </div>
        <div class="project">
          <table><thead><tr><th>Product</th><th>Usage</th><th></th></tr></thead>
            <tbody><tr><td colspan="3"><span class="pi"><svg class="fo-i"><use href="#i-folder"/></svg>Project Items</span></td></tr></tbody></table>
          <div class="hscroll"><svg viewBox="0 0 8 8"><path stroke="#888" stroke-width="1.300" d="M5.500 0l-3 4 3 4"/></svg><i></i><svg viewBox="0 0 8 8"><path stroke="#888" stroke-width="1.300" d="M2.500 0l3 4-3 4"/></svg></div>
        </div>
        <div class="grip"></div>
        <nav class="sections" aria-label="Panels">
          <button class="on"><svg><use href="#i-box"/></svg>Product/Service</button>
          <button><svg><use href="#i-tiles"/></svg>Tile Patterns</button>
          <button><svg><use href="#i-wood"/></svg>Wood Patterns</button>
          <button><svg><use href="#i-prof"/></svg>Profiles</button>
          <button><svg><use href="#i-temp"/></svg>Templates</button>
          <div class="rest"></div>
        </nav>
      </aside>

      <main class="center">
        <div class="stage">
          <div class="canvas">
            <svg class="plan" role="img" aria-label="Floor plan">
              <defs>
                <g id="grid-lines">
                  <path d="M284 0v1100M370 0v1100M457 0v1100M543 0v1100M629 0v1100M716 0v1100M802 0v1100M888 0v1100M975 0v1100M1061 0v1100M1148 0v1100M1234 0v1100M1407 0v1100M1493 0v1100M1579 0v1100M1666 0v1100M1752 0v1100M1839 0v1100"/>
                  <path d="M258 199h1617M258 285h1617M258 372h1617M258 458h1617M258 545h1617M258 631h1617M258 804h1617M258 890h1617M258 977h1617"/>
                </g>
              </defs>
              <g transform="translate(-258 -138)">
                <use href="#grid-lines" class="grid"/>
                <path class="axis" d="M1320.500 138V1080M258 717.500H1875"/>
                <path class="wall" fill-rule="evenodd" d="M530 275.500H1329.500V897H530zM542 287.500V884.500H1317V287.500z"/>
                <path class="floor" d="M542 287.500H1317V884.500H542z"/>
                <path class="wall2" d="M880.500 443.500H1137V748H880.500z"/>
                <path class="room2" d="M892 455H1125V736H892z"/>
                <g class="handle">
                  <path d="M889.500 452.500h5v5h-5zM1122.500 452.500h5v5h-5zM889.500 733.500h5v5h-5zM967.500 546.500h5v5h-5z"/>
                  <path d="M1008.500 451.500l3.500 3.500-3.500 3.500-3.500-3.500zM892 592l3.500 3.500-3.500 3.500-3.500-3.500zM1125 592l3.500 3.500-3.500 3.500-3.500-3.500z"/>
                </g>
                <g class="lbl">
                  <text x="910" y="302">26'11"</text>
                  <text x="800" y="498">Rm1</text>
                </g>
                <g class="lbl sel">
                  <text x="997" y="470">8'1"</text>
                  <text x="970" y="561">Rm2</text>
                  <text x="1098" y="602">9'9"</text>
                </g>
                <g class="arrow"><path d="M695 529.500L868 529" /><path class="head" d="M864 522.500l18 6.500-18 6.500 3-6.500z"/></g>
                <circle class="badge" cx="702.500" cy="495" r="18"/>
                <text class="num" x="702" y="503">1</text>
              </g>
            </svg>
          </div>
          <div class="vscroll"><svg viewBox="0 0 8 8"><path stroke="#999" stroke-width="1.300" d="M0 5.500l4-3.500 4 3.500"/></svg><i></i><svg viewBox="0 0 8 8"><path stroke="#999" stroke-width="1.300" d="M0 2.500L4 6l4-3.500"/></svg></div>
        </div>
        <div class="floors">
          <button aria-label="Floor list"><svg viewBox="0 0 8 8"><path fill="#000" d="M0 6h8L4 2z"/></svg></button>
          <button aria-label="Add floor" class="add"><svg><use href="#i-plus"/></svg></button>
          <button aria-label="Previous floor"><svg viewBox="0 0 8 8"><path fill="#000" d="M6 0v8L2 4z"/></svg></button>
          <button class="floor-tab">Main Floor</button>
          <button aria-label="Next floor" class="next"><svg viewBox="0 0 8 8"><path fill="#000" d="M2 0v8l4-4z"/></svg></button>
          <div class="hbar"><svg viewBox="0 0 8 8"><path stroke="#888" stroke-width="1.300" d="M5.500 0l-3 4 3 4"/></svg><i></i><svg viewBox="0 0 8 8"><path stroke="#888" stroke-width="1.300" d="M2.500 0l3 4-3 4"/></svg></div>
          <input type="range" aria-label="Zoom" min="0" max="100" value="62">
        </div>
        <footer class="status">
          <span>Ready</span>
          <div class="combo room-c"><select aria-label="Selected room"><option>Rm2</option></select><svg><use href="#c-chev"/></svg></div>
          <span>Selected: 1 Area: 78.81 SF Perimeter: 35'8"</span>
          <svg class="st" viewBox="0 0 14 14"><path stroke="#222" stroke-width="1.200" d="M1 7l6-5 6 5M1 13l6-5 6 5"/></svg>
          <svg class="st" viewBox="0 0 14 14"><path stroke="#222" stroke-width="1.500" d="M1 1h12v12H1z"/></svg>
        </footer>
      </main>

      <aside class="rail">
        <button class="expand" aria-label="Expand panel"><svg viewBox="0 0 8 8"><path stroke="#222" d="M4 .5L1 4l3 3.500M7.500.500L4.500 4l3 3.500"/></svg></button>
        <div class="fill"></div>
        <div class="grip"></div>
        <button class="on" aria-label="Report"><svg><use href="#i-r1"/></svg></button>
        <button aria-label="Estimate"><svg><use href="#i-r2"/></svg></button>
        <button aria-label="Template"><svg><use href="#i-r3"/></svg></button>
        <div class="rest"></div>
      </aside>
    </div>
  </div>
  <div class="edge-right"><i></i></div>

  <div class="menu main-menu" role="menu">
    <button><svg><use href="#i-copy"/></svg>Copy</button>
    <button><svg><use href="#i-cut"/></svg>Cut</button>
    <button><svg><use href="#i-x"/></svg>Delete</button>
    <hr>
    <button><svg><use href="#m-reopen"/></svg>Reopen to Draw</button>
    <button><svg><use href="#m-div"/></svg>Add Divider</button>
    <button><svg><use href="#m-border"/></svg>Create Border Dividers</button>
    <button class="off"><svg><use href="#m-remx"/></svg>Remove All Dividers</button>
    <button class="off"><svg><use href="#m-selx"/></svg>Select Same Product Dividers</button>
    <hr>
    <button><svg><use href="#i-merge"/></svg>Room Edit<svg class="sub"><use href="#c-right"/></svg></button>
    <hr>
    <button><svg><use href="#i-tseam"/></svg>Layout, Seam &amp; Tile<svg class="sub"><use href="#c-right"/></svg></button>
    <hr>
    <button><svg><use href="#i-prof"/></svg>Product Assignment / Profile<svg class="sub"><use href="#c-right"/></svg></button>
    <hr>
    <button><svg></svg>Add Room Template</button>
    <button><svg></svg>Export Polygon</button>
    <hr>
    <button><svg><use href="#m-phase"/></svg>Phase<svg class="sub"><use href="#c-right"/></svg></button>
    <button><svg><use href="#m-back"/></svg>Send to Back</button>
    <button><svg><use href="#m-deact"/></svg>Deactivate</button>
  </div>

  <div class="menu sub-menu" role="menu">
    <button><svg><use href="#i-arc"/></svg>Set Arc</button>
    <button><svg><use href="#m-dwall"/></svg>Draw Wall</button>
    <button><svg><use href="#m-split"/></svg>Split Wall Segment</button>
    <button><svg><use href="#m-dseg"/></svg>Delete Wall Segment</button>
    <button><svg><use href="#m-thick"/></svg>Set Wall Thickness</button>
    <button><svg><use href="#m-cove"/></svg>Set Self Coving</button>
    <hr>
    <button><svg><use href="#m-ins"/></svg>Insert Hole</button>
    <button><svg><use href="#m-mov"/></svg>Move Hole</button>
    <button><svg><use href="#m-delh"/></svg>Delete Hole</button>
    <hr>
    <button><svg><use href="#m-ceil"/></svg>Create Ceiling</button>
    <button class="off"><svg><use href="#m-ceilx"/></svg>Delete Ceiling</button>
    <hr>
    <button class="off"><svg><use href="#m-sr"/></svg>Split Room</button>
    <button class="off"><svg><use href="#m-srr"/></svg>Split Room by Region</button>
    <button class="hot"><svg><use href="#m-punch"/></svg>Punch Out</button>
    <button class="off"><svg><use href="#i-merge"/></svg>Merge Rooms</button>
  </div>

  <div class="mark mark-edit"></div>
  <div class="mark mark-punch"></div>
  <svg class="drop drop2" viewBox="0 0 46 46"><path d="M43 37L35 12A18 18 0 1 0 25 35.500z"/><text x="19" y="26">2</text></svg>
  <svg class="drop drop3" viewBox="0 0 46 46"><path d="M44 36L35.500 12A18 18 0 1 0 25 35.500z"/><text x="19" y="26">3</text></svg>
  <div class="tooltip" role="tooltip">Punch out selected areas from surrounding or adjacent rooms.</div>
  <svg class="cursor" viewBox="0 0 12 19"><path fill="#fff" stroke="#000" d="M.7 1v14.500l3.400-3.200 2.300 5.500 2.300-1-2.300-5.300h4.700z"/></svg>
</div>
</body>
</html>
```
FILE: styles.css
```css
:root {
  --b: #3b79b8;
  --r: #d0482f;
  --k: #707070;
  --g: #4ba07c;
  --o: #e9b35c;
  --p: #8f50a4;
  --line: #d9d9dc;
  --mark: #f5123a;
}
* { box-sizing: border-box; }
html, body { height: 100%; margin: 0; }
body {
  overflow: hidden;
  font-family: Lato, "Open Sans", sans-serif;
  font-size: 12px;
  line-height: 16px;
  color: #000;
}
h1, h2 { margin: 0; font-size: 12px; font-weight: 400; }
button, select, input { font: inherit; color: inherit; margin: 0; }
button { border: 0; background: none; padding: 0; white-space: nowrap; }
svg { display: block; fill: none; flex: none; width: 16px; height: 16px; }
.sprite { position: absolute; width: 0; height: 0; }
i { display: block; }

.sb { stroke: var(--b); } .fb { fill: var(--b); }
.sr { stroke: var(--r); } .fr { fill: var(--r); }
.sk { stroke: var(--k); } .fk { fill: var(--k); }
.sg { stroke: var(--g); } .fg { fill: var(--g); }
.so { stroke: var(--o); } .fo { fill: var(--o); }
.sp { stroke: var(--p); } .fp { fill: var(--p); }
.sw { stroke: #fff; } .fw { fill: #fff; }
.off { --b: #d0d0d0; --r: #d0d0d0; --k: #d0d0d0; --g: #d0d0d0; color: #a0a0a0; }
svg.dd { width: 8px; height: 8px; }

.desktop { position: relative; display: flex; height: 100%; }
.edge-left { width: 8px; background: #111; }
.edge-left .e1 { height: 40px; background: #1c3d1e; }
.edge-left .e2 { height: 80px; background: #2a5e2c; }
.edge-right { width: 8px; background: #2b2a33; }
.edge-right i { height: 30px; background: #4a4952; }
.app { flex: 1; min-width: 0; display: flex; flex-direction: column; background: #f4f4f4; }

/* title bar */
.titlebar { display: flex; align-items: center; height: 24px; padding-left: 3px; }
.tsep { width: 1px; height: 20px; background: #888; margin: 0 4px 0 7px; }
.quick { display: flex; margin-left: 5px; }
.quick button { width: 22px; display: flex; align-items: center; justify-content: center; }
.quick .wide { width: 31px; gap: 2px; }
.titlebar h1 { margin-left: 1px; }
.winbtns { display: flex; margin-left: auto; }
.winbtns button { width: 48px; height: 24px; display: grid; place-items: center; padding-top: 6px; }
.winbtns svg { width: 10px; height: 10px; }

/* tabs */
.tabs { display: flex; height: 24px; border-bottom: 1px solid var(--line); }
.file { width: 56px; height: 22px; display: flex; align-items: center; gap: 8px; padding-left: 9px; color: #fff; border: 1px solid #3b8ccb; background: linear-gradient(#8fc6ee, #4f9ed8 50%, #5aa9e2); }
.file svg { width: 8px; height: 6px; }
.tab { padding: 4px 13px 0 15px; height: 23px; }
.tab.active { height: 24px; background: #fff; border: 1px solid var(--line); border-bottom: 0; padding: 3px 10px 0; }

/* ribbon */
.ribbon { display: flex; height: 90px; background: linear-gradient(#fff, #f9f9f9 30%, #f8f8f8); border-bottom: 1px solid var(--line); }
.group { display: flex; flex-direction: column; padding-top: 3px; border-right: 1px solid var(--line); border-image: linear-gradient(transparent 8px, var(--line) 8px, var(--line) 82px, transparent 82px) 1; }
.group h2 { text-align: center; color: #9d9d9d; line-height: 20px; }
.items { display: grid; height: 66px; }
.g-import { width: 142px; } .g-import .items { grid-template-columns: 45px 45px 44px; padding-left: 6px; }
.g-room { width: 180px; } .g-room .items { grid-template-columns: 46px 42px 1fr; }
.g-shape { width: 222px; } .g-shape .items { grid-template-columns: 52px 85px 1fr; }
.g-markup { width: 159px; } .g-markup .items { grid-template-columns: 48px 41px 1fr; }
.g-estimate { width: 194px; } .g-estimate .items { grid-template-columns: 60px 1fr; }
.g-layout { width: 208px; } .g-layout .items { grid-template-columns: 58px 46px 1fr; }
.g-zoom { width: 104px; } .g-zoom .items { grid-template-columns: 48px 1fr; }
.g-view { width: 133px; } .g-view .items { grid-template-columns: 49px 1fr; }
.g-edit { width: 242px; } .g-edit .items { grid-template-columns: 48px 41px 46px 42px 1fr; }
.g-shapeedit { width: 187px; } .g-shapeedit .items { grid-template-columns: 50px 63px 1fr; }
.g-room .col, .g-markup .col, .g-layout .col { padding-left: 7px; }
.g-edit .col { padding-left: 5px; }
.big { display: flex; flex-direction: column; align-items: center; padding-top: 4px; line-height: 13px; }
.big > svg:first-child { width: 32px; height: 32px; margin-bottom: 2px; }
.big > .dd { margin-top: 2px; }
.big span { display: flex; align-items: center; gap: 3px; }
.col { display: grid; grid-auto-rows: 22px; }
.sm { display: flex; align-items: center; justify-content: flex-start; gap: 2px; }
.sm .dd { margin-left: 8px; }
.sm.tight .dd { margin-left: 0; }

.combo { position: relative; display: flex; align-items: center; border: 1px solid #acacac; background: #fff; }
.combo select { appearance: none; border: 0; background: none; width: 100%; height: 100%; padding: 0 16px 0 6px; }
.combo svg { position: absolute; right: 6px; width: 8px; height: 8px; pointer-events: none; }
.combo.grey { background: linear-gradient(#f0f0f0, #e5e5e5); }
.est { display: flex; flex-direction: column; gap: 2px; padding-top: 1px; }
.est .combo { width: 128px; height: 24px; font-style: italic; }
.est select { padding-left: 0; }
.player { width: 128px; height: 30px; display: flex; align-items: center; gap: 8px; padding-left: 4px; border: 1px solid #d4d4d4; border-radius: 2px; }
.player button svg { width: 20px; height: 20px; }
.pct { width: 55px; height: 22px; }
.pct select { padding-left: 4px; }

/* body */
.body { flex: 1; min-height: 0; display: flex; }
.side { width: 250px; display: flex; flex-direction: column; border: solid #cfcfd3; border-width: 1px 4px 0 1px; background: #fff; }
.side-head { display: flex; align-items: center; height: 24px; padding: 0 5px 0 4px; gap: 10px; background: linear-gradient(90deg, #fff, #f0f0f0); border-bottom: 1px solid #cfcfd6; }
.side-head h2 { flex: 1; }
.side-head svg { width: 10px; height: 8px; }
.catalog { display: flex; align-items: center; gap: 4px; height: 24px; }
.catalog .combo { width: 221px; height: 24px; }
.tools { display: flex; align-items: center; height: 22px; gap: 6px; padding: 0 3px; }
.tools .pm { width: 10px; }
.tools input { flex: 1; min-width: 0; height: 20px; border: 1px solid #abadb3; background: #fff; }
.tree { list-style: none; margin: 0; padding: 2px 0 0 7px; height: 323px; border: 1px solid #9a9aa2; border-bottom: 0; }
.tree li { display: flex; align-items: center; height: 18px; line-height: 18px; }
.ex { width: 9px; height: 9px; }
.fo-i { width: 16px; height: 15px; margin: 0 5px 0 3px; }
.tree .l2 { padding-left: 16px; }
.tree .leaf { padding-left: 28px; }
.tree .sw { width: 16px; height: 16px; margin-right: 1px; border: 1px solid #000; }
.tree .grey-sw { background: #808080; border-color: #808080; }
.red-sw { background: #f00; } .tree .green-sw { background: #008000; border-color: #008000; }
.blue-sw { background: #00f; } .cyan-sw { background: #0ff; }
.splitter { height: 3px; background: #d4d4d6; }
.project { flex: 1; display: flex; flex-direction: column; border: 1px solid #828790; padding: 2px; }
table { width: 100%; border-collapse: collapse; table-layout: fixed; }
th { font-weight: 400; height: 19px; padding: 0; border: solid #e2e2e6; border-width: 0 1px 1px 0; background: linear-gradient(#fff, #f5f6f7); }
th:nth-child(1) { width: 122px; } th:nth-child(2) { width: 75px; }
td { padding: 1px 0 0 14px; }
.pi { display: flex; align-items: center; }
.hscroll { margin-top: auto; height: 17px; display: flex; align-items: center; background: #f0f0f0; padding: 0 5px; }
.hscroll i { width: 62px; height: 17px; background: #cdcdcd; margin: 0 auto 0 4px; }
.hscroll svg, .hbar svg, .vscroll svg { width: 8px; height: 8px; }
.grip { height: 6px; background: #f4f4f4 radial-gradient(circle, #777 1px, transparent 1px) center / 4px 4px; background-clip: content-box; padding: 1px 112px; }
.sections { background: #f4f4f4; }
.sections button { width: 100%; height: 28px; display: flex; align-items: center; gap: 8px; padding-left: 4px; font-weight: 700; border-top: 1px solid #c9c9cf; }
.sections svg { width: 24px; height: 24px; }
.on { background: #f0ffff; }
.rest { height: 29px; border: solid #c9c9cf; border-width: 1px 0; background: #f4f4f4; }

.center { flex: 1; min-width: 0; display: flex; flex-direction: column; }
.stage { flex: 1; min-height: 0; display: flex; background: #fff; }
.canvas { flex: 1; min-width: 0; overflow: hidden; }
.plan { width: 100%; height: 100%; }
.vscroll { width: 17px; background: #f0f0f0; display: flex; flex-direction: column; align-items: center; justify-content: space-between; padding: 5px 0; }
.vscroll i { width: 17px; height: 42px; margin-bottom: 10px; background: #cdcdcd; }
.grid { stroke: #d8bdf6; stroke-width: 1.5; stroke-dasharray: 4 2; }
.axis { stroke: #8c8c90; stroke-width: 1.5; stroke-dasharray: 4 2 1 2; }
.wall { fill: #ffb738; stroke: #3b3b3b; stroke-width: 1.5; }
.floor { fill: #fff; fill-opacity: .75; }
.wall2 { fill: #ffedd0; stroke: #d2cec6; }
.room2 { fill: #fff; stroke: #f00; stroke-width: 2; }
.handle path { fill: #f00; stroke: #000; }
.lbl text { font: 13px "DejaVu Sans Condensed", "DejaVu Sans", sans-serif; fill: #111; }
.sel text { fill: #f00; }
.arrow path { stroke: var(--mark); stroke-width: 3; }
.arrow .head { fill: var(--mark); stroke: none; }
.badge, .drop path { fill: #f43c3c; }
.num, .drop text { font: 700 22px "Open Sans", sans-serif; fill: #fff; text-anchor: middle; }

.floors { height: 18px; display: flex; align-items: center; background: #fff; padding-left: 4px; }
.floors button svg { width: 8px; height: 8px; }
.floors .add svg { width: 12px; height: 12px; }
.floors button { margin-right: 8px; }
.floors .floor-tab { font-weight: 700; color: #00008b; padding: 4px 7px 0 6px; margin: 0; height: 18px; border-right: 1px solid #aaa; line-height: 14px; }
.floors .next { margin: 0 3px 0 auto; }
.hbar { width: 152px; height: 17px; display: flex; align-items: center; justify-content: space-between; padding: 0 5px; border: solid #cdcdcd; border-width: 0 3px; background: linear-gradient(90deg, #f0f0f0 17px, #fff 17px, #fff 129px, #f0f0f0 129px); }
.hbar i { width: 10px; height: 17px; background: #cdcdcd; }
.floors input { appearance: none; width: 142px; height: 18px; margin: 0 4px; background: linear-gradient(transparent 7px, #d6d6d6 7px, #e7eaea 8px, #e7eaea 10px, #d6d6d6 10px, transparent 11px); }
.floors input::-webkit-slider-thumb { appearance: none; width: 11px; height: 18px; background: #f0f0f0; border: 1px solid #acacac; }
.status { height: 20px; display: flex; align-items: center; background: #f4f4f4; padding: 1px 3px 0 1px; }
.room-c { width: 119px; height: 19px; margin: 0 4px 0 auto; }
.st { width: 14px; height: 14px; margin-left: 6px; }
.st + .st { margin-left: 2px; }

.rail { width: 36px; border: solid #cdcdd2; border-width: 1px 1px 0 4px; display: flex; flex-direction: column; }
.rail .expand { height: 23px; padding-right: 9px; background: #fdfdfd; border: 0; justify-items: end; }
.rail .expand svg { width: 10px; height: 8px; }
.rail .fill { flex: 1; border-bottom: 1px solid #c9c9cf; }
.rail .grip { padding: 1px 6px; }
.rail button { height: 28px; display: grid; place-items: center; border-top: 1px solid #c9c9cf; }
.rail button svg { width: 22px; height: 22px; }

/* context menus */
.menu { position: absolute; background: #f4f4f4; border: 1px solid #999; padding: 3px 0 1px; box-shadow: 3px 3px 2px rgba(0, 0, 0, .45); }
.menu button { display: flex; align-items: center; width: 100%; height: 22px; gap: 16px; padding: 0 7px 0 6px; text-align: left; }
.menu .sub { width: 8px; height: 8px; margin-left: auto; }
.menu hr { height: 1px; margin: 2px 2px 2px 32px; border: 0; background: #d4d4d4; }
.menu .off { color: #7d7d7d; }
.main-menu { left: 944px; top: 640px; width: 247px; background: linear-gradient(90deg, #f0f0f0 30px, #e2e2e2 30px, #fafafa 31px, #f4f4f4 32px); }
.sub-menu { left: 1185px; top: 497px; width: 205px; box-shadow: none; background: linear-gradient(90deg, #f0f0f0 31px, #999 31px, #999 32px, #f0f0f0 32px); }
.sub-menu button { padding-left: 5px; }
.sub-menu .hot { background: linear-gradient(90deg, #c4e0ed 31px, #777 31px, #777 32px, #bfdcea 32px); box-shadow: inset 0 0 0 1px #26a0da; }
.mark { position: absolute; border: 3px solid var(--mark); border-radius: 4px; }
.mark-edit { left: 945px; top: 828px; width: 245px; height: 25px; }
.mark-punch { left: 1184px; top: 799px; width: 206px; height: 27px; }
.drop { position: absolute; width: 46px; height: 46px; }
.drop2 { left: 896px; top: 804px; }
.drop3 { left: 1140px; top: 770px; }
.tooltip { position: absolute; left: 1366px; top: 838px; height: 26px; padding: 5px 6px; background: #f1f2f7; border: 1px solid #767676; color: #575757; }
.cursor { position: absolute; left: 1366px; top: 817px; width: 12px; height: 19px; }
```
